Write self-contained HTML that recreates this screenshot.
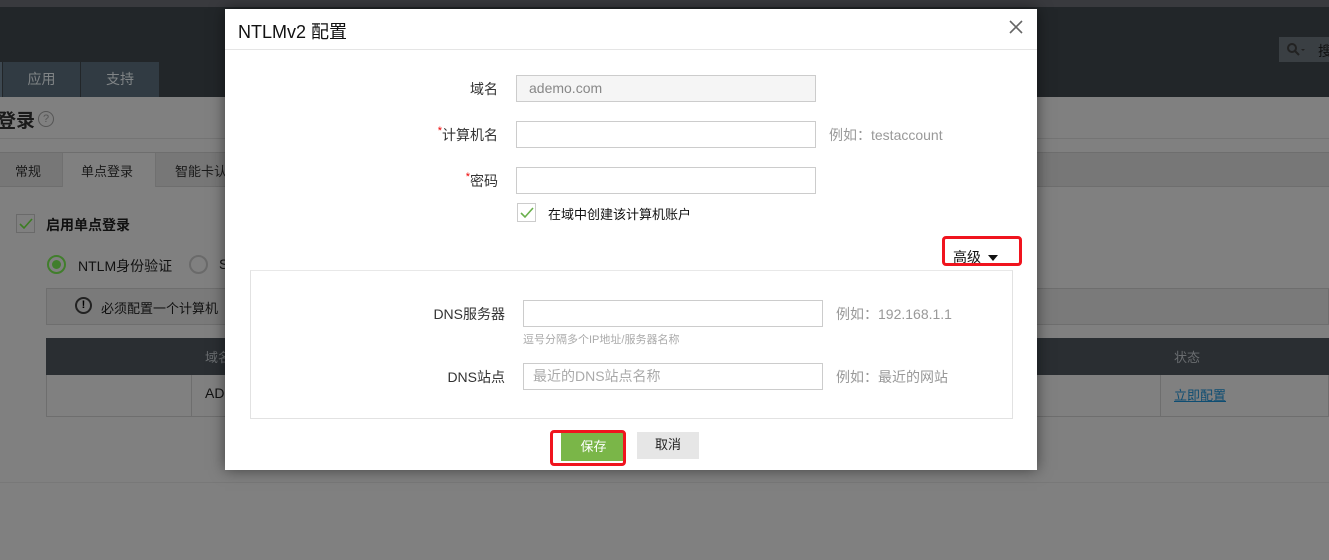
<!DOCTYPE html>
<html><head><meta charset="utf-8"><style>
*{margin:0;padding:0;box-sizing:border-box}
html,body{background:#808080}
body{width:1329px;height:560px;position:relative;overflow:hidden;font-family:"Liberation Sans","Noto Sans CJK SC",sans-serif;font-size:13px}
.a{position:absolute}
.t{white-space:nowrap}
.box{position:absolute;border:1px solid #ccc;background:#fff;height:27px}
.lbl{position:absolute;font-size:14px;color:#333;text-align:right;white-space:nowrap}
.hint{position:absolute;font-size:14px;color:#999;white-space:nowrap}
</style></head><body>
<div class="a" style="left:0;top:0;width:1329px;height:7px;background:#393a3e"></div>
<div class="a" style="left:0;top:7px;width:1329px;height:90px;background:#222629"></div>
<div class="a" style="left:0;top:62px;width:2px;height:35px;background:#3d4851"></div>
<div class="a" style="left:3px;top:62px;width:77px;height:35px;background:#313b43;color:#808486;font-size:14px;text-align:center;line-height:34px">应用</div>
<div class="a" style="left:81px;top:62px;width:78px;height:35px;background:#313b43;color:#808486;font-size:14px;text-align:center;line-height:34px">支持</div>
<div class="a" style="left:1279px;top:37px;width:50px;height:25px;background:#3a3f43"></div>
<svg class="a" style="left:1286px;top:42px" width="20" height="14"><circle cx="6" cy="6" r="4" fill="none" stroke="#222" stroke-width="2"/><path d="M9 9l4 4" stroke="#222" stroke-width="2"/><path d="M15 7h4l-2 2z" fill="#222"/></svg>
<div class="a t" style="left:1318px;top:41px;color:#111;font-size:14px">搜</div>
<div class="a t" style="left:-3px;top:106px;font-size:19px;font-weight:bold;color:#1a1a1a">登录</div>
<div class="a" style="left:38px;top:111px;width:16px;height:16px;border:1px solid #555;border-radius:50%;font-size:11px;color:#555;text-align:center;line-height:14px">?</div>
<div class="a" style="left:0;top:138px;width:1329px;height:1px;background:#747474"></div>
<div class="a" style="left:0;top:152px;width:1329px;height:35px;background:#777;border-top:1px solid #6e6e6e;border-bottom:1px solid #6e6e6e"></div>
<div class="a t" style="left:15px;top:161px;font-size:13px;color:#1a1a1a">常规</div>
<div class="a" style="left:62px;top:153px;width:94px;height:34px;background:#808080;border-left:1px solid #707070;border-right:1px solid #707070"></div>
<div class="a t" style="left:81px;top:161px;font-size:13px;color:#1a1a1a">单点登录</div>
<div class="a t" style="left:175px;top:161px;font-size:13px;color:#1a1a1a">智能卡认</div>
<div class="a" style="left:16px;top:214px;width:19px;height:19px;border:1px solid #6a6a6a"></div>
<svg class="a" style="left:16px;top:214px" width="19" height="19"><path d="M4 10l4 4 8-9" fill="none" stroke="#3c7d22" stroke-width="1.6"/></svg>
<div class="a t" style="left:46px;top:215px;font-size:14px;font-weight:bold;color:#111">启用单点登录</div>
<div class="a" style="left:47px;top:255px;width:19px;height:19px;border:2px solid #417e2c;border-radius:50%"><div style="margin:3px;width:9px;height:9px;border-radius:50%;background:#417e2c"></div></div>
<div class="a t" style="left:78px;top:256px;font-size:14px;color:#111">NTLM身份验证</div>
<div class="a" style="left:189px;top:255px;width:19px;height:19px;border:2px solid #6a6a6a;border-radius:50%"></div>
<div class="a t" style="left:219px;top:256px;font-size:14px;color:#111">S</div>
<div class="a" style="left:46px;top:288px;width:1283px;height:37px;border:1px solid #6e6e6e;background:#7a7a7a"></div>
<div class="a" style="left:75px;top:297px;width:17px;height:17px;border:2px solid #222;border-radius:50%;font-size:11px;font-weight:bold;text-align:center;line-height:13px">!</div>
<div class="a t" style="left:101px;top:298px;font-size:13px;color:#111">必须配置一个计算机</div>
<div class="a" style="left:46px;top:338px;width:1283px;height:37px;background:#2a2e32"></div>
<div class="a t" style="left:205px;top:347px;font-size:13px;color:#6a6d70">域名</div>
<div class="a t" style="left:1174px;top:347px;font-size:13px;color:#6a6d70">状态</div>
<div class="a" style="left:46px;top:375px;width:1283px;height:42px;border:1px solid #6e6e6e;border-top:0"></div>
<div class="a" style="left:191px;top:375px;width:1px;height:41px;background:#6e6e6e"></div>
<div class="a" style="left:1160px;top:375px;width:1px;height:41px;background:#6e6e6e"></div>
<div class="a t" style="left:205px;top:385px;font-size:14px;color:#111">AD</div>
<div class="a t" style="left:1174px;top:385px;font-size:13px;color:#0e4d72;text-decoration:underline">立即配置</div>
<div class="a" style="left:0;top:482px;width:1329px;height:1px;background:#787878"></div>

<div class="a" style="left:225px;top:9px;width:812px;height:461px;background:#fff;box-shadow:0 0 14px rgba(0,0,0,.5)">
 <div class="a t" style="left:13px;top:9px;font-size:18px;color:#111">NTLMv2 配置</div>
 <svg class="a" style="left:784px;top:11px" width="14" height="14"><path d="M1 1l12 12M13 1L1 13" stroke="#666" stroke-width="1.6"/></svg>
 <div class="a" style="left:0;top:40px;width:812px;height:1px;background:#e5e5e5"></div>
 <div class="lbl" style="right:539px;top:70px">域名</div>
 <div class="box" style="left:291px;top:66px;width:300px;background:#f5f5f5;padding-left:12px;line-height:25px;font-size:14px;color:#888">ademo.com</div>
 <div class="lbl" style="right:539px;top:116px"><span style="color:#e00;font-size:11px;vertical-align:top">*</span>计算机名</div>
 <div class="box" style="left:291px;top:112px;width:300px"></div>
 <div class="hint" style="left:604px;top:116px">例如：testaccount</div>
 <div class="lbl" style="right:539px;top:162px"><span style="color:#e00;font-size:11px;vertical-align:top">*</span>密码</div>
 <div class="box" style="left:291px;top:158px;width:300px"></div>
 <div class="a" style="left:292px;top:194px;width:19px;height:19px;border:1px solid #ccc"></div>
 <svg class="a" style="left:292px;top:194px" width="19" height="19"><path d="M4 10l4 4 8-9" fill="none" stroke="#6ab04c" stroke-width="1.6"/></svg>
 <div class="a t" style="left:323px;top:195px;font-size:13px;color:#111">在域中创建该计算机账户</div>
 <div class="a" style="left:717px;top:227px;width:80px;height:30px;border:3px solid #f0141e;border-radius:4px"></div>
 <div class="a t" style="left:728px;top:238px;font-size:14px;color:#111">高级</div>
 <svg class="a" style="left:763px;top:246px" width="10" height="6"><path d="M0 0h10L5 6z" fill="#111"/></svg>
 <div class="a" style="left:25px;top:261px;width:763px;height:149px;border:1px solid #e2e2e2;border-top:1px solid #e8e8e8"></div>
 <div class="lbl" style="right:532px;top:295px">DNS服务器</div>
 <div class="box" style="left:298px;top:291px;width:300px"></div>
 <div class="hint" style="left:611px;top:295px">例如：192.168.1.1</div>
 <div class="a t" style="left:298px;top:322px;font-size:11px;color:#aaa">逗号分隔多个IP地址/服务器名称</div>
 <div class="lbl" style="right:532px;top:358px">DNS站点</div>
 <div class="box" style="left:298px;top:354px;width:300px;padding-left:9px;line-height:25px;font-size:14px;color:#aaa">最近的DNS站点名称</div>
 <div class="hint" style="left:611px;top:358px">例如：最近的网站</div>
 <div class="a" style="left:336px;top:424px;width:65px;height:28px;background:#7ab648;color:#fff;font-size:13px;text-align:center;line-height:27px">保存</div>
 <div class="a" style="left:325px;top:421px;width:76px;height:36px;border:3px solid #f0141e;border-radius:4px"></div>
 <div class="a" style="left:412px;top:423px;width:62px;height:27px;background:#e6e6e6;color:#222;font-size:13px;text-align:center;line-height:26px">取消</div>
</div>
</body></html>
